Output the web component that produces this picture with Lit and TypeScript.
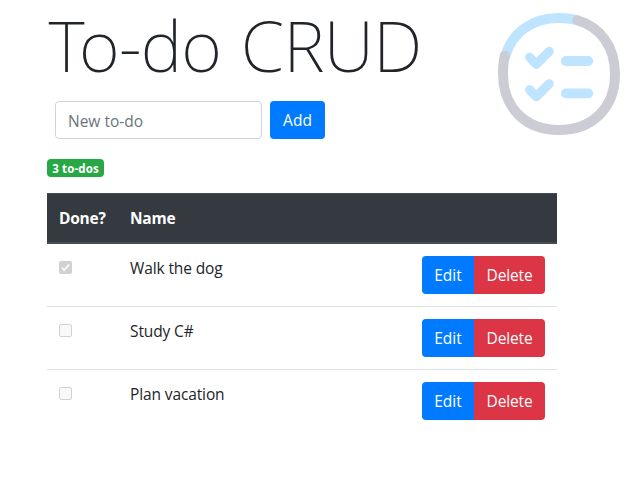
import { LitElement, html, css, svg } from "lit";
import { customElement, state } from "lit/decorators.js";

interface Todo {
  name: string;
  done: boolean;
}

@customElement("todo-logo")
class TodoLogo extends LitElement {
  static styles = css`
    :host { display: block; width: 122px; height: 122px; }
    svg { display: block; fill: none; stroke-linecap: round; stroke-linejoin: round; }
    .blue { stroke: #bfe4ff; }
    .gray { stroke: #cbccd4; }
  `;
  render() {
    return html`<svg width="122" height="122" viewBox="0 0 122 122">
      <path class="blue" stroke-width="10" d="M7.4 43.1C14 19.7 33.8 5 61 5C67.4 5 73.4 5.8 78.9 7.2" />
      <path class="gray" stroke-width="10" d="M79.4 7.2C102.3 14 117 33.8 117 61C117 94.6 94.6 117 61 117C27.4 117 5 94.6 5 61C5 54.6 5.4 48.6 6.7 42.6" />
      ${[0, 32.4].map(
        (dy) => svg`<g class="blue" transform="translate(0 ${dy})">
          <path stroke-width="9.2" d="M31.7 44.4L38.3 51.3L51.2 38.4" />
          <path stroke-width="9.8" d="M67.8 48H90.2" />
        </g>`
      )}
    </svg>`;
  }
}

@customElement("app-root")
class AppRoot extends LitElement {
  static styles = css`
    :host {
      display: block;
      position: relative;
      box-sizing: border-box;
      height: 486px;
      padding: 2px 0 0 47px;
      overflow: hidden;
      background: #fff;
      color: #212529;
      font: 400 15.5px/24px "Open Sans", "Noto Sans", sans-serif;
    }
    * { box-sizing: border-box; }
    todo-logo { position: absolute; left: 498px; top: 13px; }
    h1 {
      margin: 0 0 13px;
      padding-left: 1.5px;
      height: 86px;
      font-weight: 200;
      font-size: 70px;
      line-height: 86px;
      letter-spacing: -0.7px;
      word-spacing: 2px;
      font-family: "Noto Sans", "Open Sans", sans-serif;
      white-space: nowrap;
    }
    .form { display: flex; gap: 8px; padding-left: 8px; }
    input[type="text"] {
      width: 207px;
      height: 38px;
      margin: 0;
      padding: 8px 12px 6px;
      border: 1px solid #ced4da;
      border-radius: 4px;
      font: inherit;
      outline: none;
    }
    input::placeholder { color: #6c757d; opacity: 1; }
    button {
      height: 38px;
      margin: 0;
      padding: 0;
      border: 0;
      border-radius: 4px;
      background: #007bff;
      color: #fff;
      font: inherit;
    }
    .add { width: 55px; }
    .badge {
      display: flex;
      align-items: center;
      justify-content: center;
      width: 57px;
      height: 18px;
      margin: 20px 0 16px;
      padding-top: 1px;
      border-radius: 4px;
      background: #28a745;
      color: #fff;
      font-size: 11.5px;
      font-weight: 700;
      line-height: 18px;
      letter-spacing: 0.15px;
      white-space: nowrap;
    }
    .table { width: 510px; }
    .row {
      display: grid;
      grid-template-columns: 71px 1fr auto;
      height: 63px;
      padding: 12px;
      border-top: 1px solid #dee2e6;
      letter-spacing: -0.12px;
    }
    .row.first { border-top: 0; height: 62px; }
    .head {
      height: 51px;
      border-top: 1px solid #454d55;
      border-bottom: 2px solid #454d55;
      background: #343a40;
      color: #fff;
      font-weight: 700;
      letter-spacing: -0.25px;
    }
    .check {
      display: block;
      width: 13px;
      height: 13px;
      margin-top: 5px;
    }
    .actions { display: flex; }
    .edit { width: 52px; border-radius: 4px 0 0 4px; }
    .delete { width: 71px; border-radius: 0 4px 4px 0; background: #dc3545; letter-spacing: -0.15px; }
  `;

  @state() private todos: Todo[] = [
    { name: "Walk the dog", done: true },
    { name: "Study C#", done: false },
    { name: "Plan vacation", done: false },
  ];

  private checkbox(done: boolean) {
    return html`<svg class="check" viewBox="0 0 13 13">
      ${done
        ? svg`<rect width="13" height="13" rx="2" fill="#d1d1d1" />
            <path d="M2.8 6.7L5.2 9.1L10.2 3.6" fill="none" stroke="#f8f8f8" stroke-width="1.9" />`
        : svg`<rect x=".5" y=".5" width="12" height="12" rx="1.6" fill="#f9f9f9" stroke="#d1d1d1" />`}
    </svg>`;
  }

  render() {
    return html`
      <todo-logo></todo-logo>
      <h1>To-do CRUD</h1>
      <div class="form">
        <input type="text" placeholder="New to-do" />
        <button class="add">Add</button>
      </div>
      <div class="badge">${this.todos.length} to-dos</div>
      <div class="table">
        <div class="row head"><span>Done?</span><span>Name</span></div>
        ${this.todos.map(
          (t, i) => html`<div class="row ${i === 0 ? "first" : ""}">
            ${this.checkbox(t.done)}
            <span>${t.name}</span>
            <div class="actions">
              <button class="edit">Edit</button><button class="delete">Delete</button>
            </div>
          </div>`
        )}
      </div>
    `;
  }
}
